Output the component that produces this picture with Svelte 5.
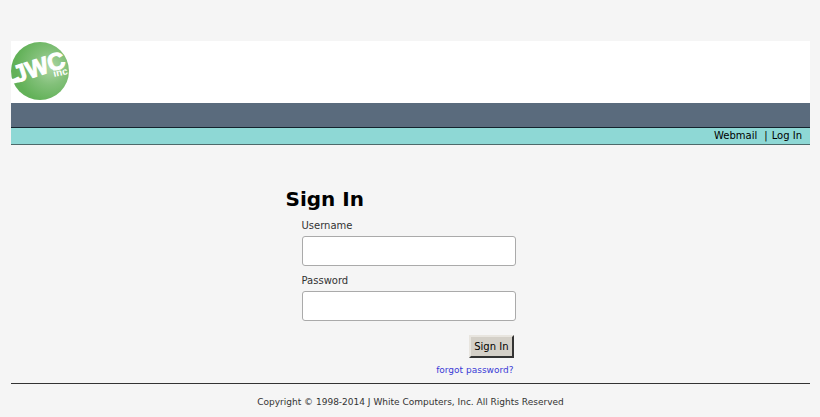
<script>
  let username = $state('');
  let password = $state('');
</script>

<div class="page">
  <header>
    <a class="logo" href="/" aria-label="JWC Inc">
      <svg width="64" height="62" viewBox="0 0 64 62">
        <defs>
          <radialGradient id="ball" cx="0.68" cy="0.44" r="0.6">
            <stop offset="0" stop-color="#add6a5" />
            <stop offset="0.5" stop-color="#82c079" />
            <stop offset="1" stop-color="#62b158" />
          </radialGradient>
        </defs>
        <circle cx="29" cy="30" r="29" fill="url(#ball)" />
        <path d="M0 38 L8 37 L9 41 L1 43 L0 42 Z" fill="#fff" />
        <text class="mark" transform="translate(5 42) rotate(-18)">JWC</text>
        <text class="inc" transform="translate(43 36) rotate(-12)">inc</text>
      </svg>
    </a>
    <div class="bar"></div>
    <nav>
      <a href="/webmail">Webmail</a>
      <span>|</span>
      <a href="/login">Log In</a>
    </nav>
  </header>

  <main>
    <h1>Sign In</h1>
    <form onsubmit={(e) => e.preventDefault()}>
      <label for="username">Username</label>
      <input id="username" type="text" bind:value={username} />
      <label for="password">Password</label>
      <input id="password" type="password" bind:value={password} />
      <div class="actions">
        <button type="submit">Sign In</button>
        <a href="/forgot">forgot password?</a>
      </div>
    </form>
  </main>

  <footer>Copyright © 1998-2014 J White Computers, Inc. All Rights Reserved</footer>
</div>

<style>
  :global(body) {
    margin: 0;
    background: #f5f5f5;
    color: #000;
    font-family: "DejaVu Sans", Verdana, sans-serif;
  }

  .page {
    padding: 41px 10px 0 11px;
  }

  .logo {
    display: block;
    height: 62px;
    background: #fff;
  }

  .logo svg {
    display: block;
  }

  .mark {
    font: bold 24px "Liberation Sans", sans-serif;
    fill: #fff;
    stroke: #fff;
    stroke-width: 1px;
  }

  .inc {
    font: bold 10px "Liberation Sans", sans-serif;
    fill: #fff;
  }

  .bar {
    height: 24px;
    background: #5a6b7d;
    border-bottom: 1px solid #14232d;
  }

  nav {
    display: flex;
    justify-content: flex-end;
    gap: 4px;
    padding: 0 8px;
    font-size: 10px;
    line-height: 16px;
    background: #8ed8d5;
    border-bottom: 1px solid #4d6a6a;
  }

  nav a {
    color: #000;
    text-decoration: none;
  }

  nav span {
    margin-left: 3px;
  }

  main {
    width: 250px;
    margin: 0 auto;
    padding: 40px 0 5px;
  }

  h1 {
    margin: 0;
    font-size: 20px;
    line-height: 28px;
  }

  form {
    width: 214px;
    margin-left: 16px;
    padding-top: 4px;
  }

  label {
    display: block;
    padding-bottom: 2px;
    color: #333;
    font-size: 10px;
    line-height: 17px;
  }

  input {
    display: block;
    box-sizing: border-box;
    width: 100%;
    height: 30px;
    margin: 0 0 6px;
    padding: 4px 6px;
    border: 1px solid #aaa;
    border-radius: 3px;
    background: #fff;
    font: inherit;
    font-size: 12px;
  }

  .actions {
    display: flex;
    flex-direction: column;
    align-items: flex-end;
    gap: 4px;
    padding: 8px 2px 0 0;
  }

  button {
    padding: 2px 3px;
    border: 2px solid;
    border-color: #e8e5df #333 #333 #e8e5df;
    background: #d4d0c8;
    color: #000;
    font: inherit;
    font-size: 10px;
    line-height: 15px;
  }

  .actions a {
    color: #3a3ad6;
    font-size: 9px;
    line-height: 16px;
    text-decoration: none;
  }

  footer {
    padding: 10px 0;
    border-top: 1px solid #333;
    color: #333;
    font-size: 9px;
    line-height: 16px;
    text-align: center;
  }
</style>
